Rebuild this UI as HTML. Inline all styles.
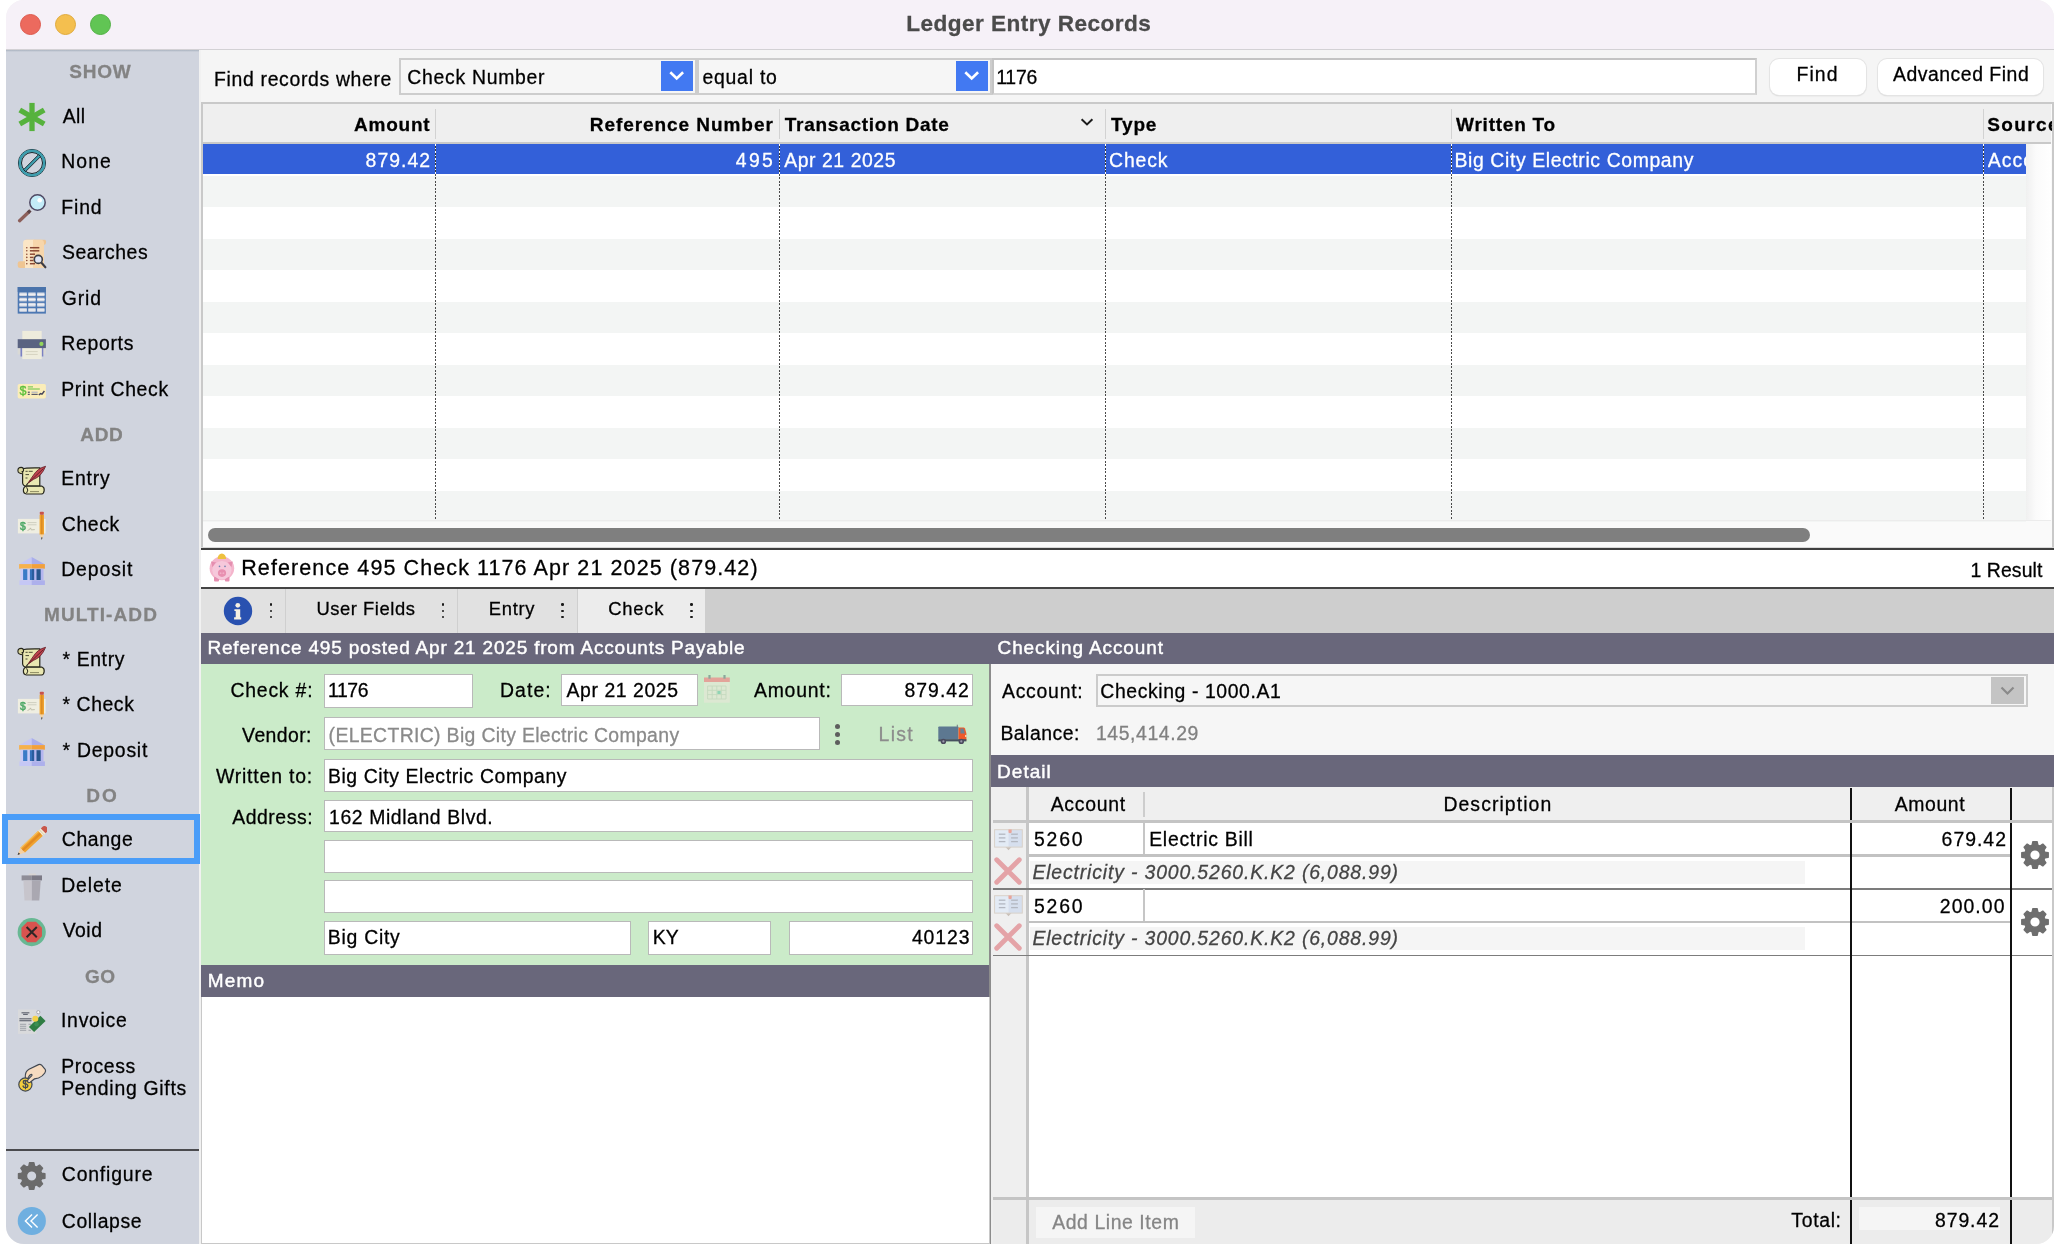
<!DOCTYPE html>
<html><head><meta charset="utf-8"><title>Ledger Entry Records</title>
<style>
*{box-sizing:border-box;margin:0;padding:0}
html,body{width:2054px;height:1244px;overflow:hidden;background:#fff}
body{font-family:"Liberation Sans",sans-serif;font-size:19.4px;color:#000;position:relative;line-height:24px;-webkit-text-stroke:.28px}
.a{position:absolute}
#win{position:absolute;left:6px;top:0;width:2048px;height:1244px;border-radius:18px;overflow:hidden;background:#f5f5f5}
#pg{position:absolute;left:-6px;top:0;width:2054px;height:1244px;will-change:transform}
.tl{position:absolute;top:14px;width:21px;height:21px;border-radius:50%}
.t{position:absolute;white-space:nowrap}
.f{position:absolute;background:#fff;border:1.5px solid #b9b9b9}
.dot{position:absolute;width:1.5px;background:repeating-linear-gradient(#4a4a4a 0 1.6px,transparent 1.6px 3.5px)}
.v3{position:absolute;width:2.5px}
.v3 i{display:block;width:2.5px;height:2.5px;background:#1a1a1a;margin-bottom:3.8px;border-radius:50%}
.d5{position:absolute;width:5px}
.d5 i{display:block;width:5px;height:5px;border-radius:50%;background:#5e5e5e;margin-bottom:3.2px}
</style></head><body>
<div id="win"><div id="pg">
<div class="a" style="left:0px;top:0px;width:2054px;height:49px;background:#f6f1f8;"></div>
<div class="a" style="left:0px;top:49px;width:2054px;height:1.5px;background:#d3d1d5;"></div>
<div class="tl" style="left:20px;background:#ec6a5e;border:1px solid #dd5a4e"></div><div class="tl" style="left:55px;background:#f4bf4f;border:1px solid #e0aa3c"></div><div class="tl" style="left:90px;background:#61c554;border:1px solid #52b145"></div>
<div class="t" style="left:906.29px;top:12.10px;letter-spacing:0.449px;font-size:22.6px;font-weight:bold;color:#4b4b4b;">Ledger Entry Records</div>
<div class="a" style="left:6px;top:50px;width:193px;height:1194px;background:#d0d4de;"></div>
<div class="a" style="left:6px;top:50px;width:193px;height:2px;background:linear-gradient(#aab3c0,#d0d4de);"></div>
<div class="t" style="left:69.15px;top:60.20px;letter-spacing:0.853px;font-size:19px;font-weight:bold;color:#838383;">SHOW</div>
<div class="t" style="left:80.33px;top:423.20px;letter-spacing:0.654px;font-size:19px;font-weight:bold;color:#838383;">ADD</div>
<div class="t" style="left:44.03px;top:603.40px;letter-spacing:1.092px;font-size:19px;font-weight:bold;color:#838383;">MULTI-ADD</div>
<div class="t" style="left:86.33px;top:784.30px;letter-spacing:1.869px;font-size:19px;font-weight:bold;color:#838383;">DO</div>
<div class="t" style="left:84.92px;top:964.70px;letter-spacing:0.520px;font-size:19px;font-weight:bold;color:#838383;">GO</div>
<svg class="a" style="left:17.3px;top:102.3px" width="30" height="30" viewBox="0 0 30 30"><g stroke="#56b23d" stroke-width="5.3"><line x1="15.00" y1="0.90" x2="15.00" y2="29.10"/><line x1="2.79" y1="7.95" x2="27.21" y2="22.05"/><line x1="27.21" y1="7.95" x2="2.79" y2="22.05"/></g></svg>
<div class="t" style="left:62.76px;top:103.70px;letter-spacing:0.438px;">All</div>
<svg class="a" style="left:17.3px;top:147.8px" width="30" height="30" viewBox="0 0 30 30"><circle cx="15" cy="15" r="13.6" fill="none" stroke="#16252b" stroke-width="1"/><circle cx="15" cy="15" r="12.1" fill="none" stroke="#3f9eae" stroke-width="2.6"/><circle cx="15" cy="15" r="10.5" fill="none" stroke="#16252b" stroke-width="1"/><path d="M6.6 21.6 L21.6 6.6 L23.6 8.6 L8.6 23.6Z" fill="#3f9eae" stroke="#16252b" stroke-width=".9"/><circle cx="15" cy="15" r="12.1" fill="none" stroke="#3f9eae" stroke-width="1.9"/></svg>
<div class="t" style="left:61.21px;top:149.20px;letter-spacing:1.092px;">None</div>
<svg class="a" style="left:17.3px;top:193.2px" width="30" height="30" viewBox="0 0 30 30"><line x1="2.6" y1="27.7" x2="11.5" y2="19.2" stroke="#8c5f5a" stroke-width="3.3" stroke-linecap="round"/><line x1="11" y1="19.7" x2="13.4" y2="17.4" stroke="#5c4346" stroke-width="3.3"/><circle cx="20.5" cy="9.5" r="7.7" fill="#c3ecf8" stroke="#4f4964" stroke-width="1.5"/><circle cx="22.7" cy="7.3" r="2.3" fill="#fff"/></svg>
<div class="t" style="left:61.21px;top:194.60px;letter-spacing:0.901px;">Find</div>
<svg class="a" style="left:17.3px;top:239.0px" width="30" height="30" viewBox="0 0 30 30"><path d="M8.5 0.8 H27.5 Q29.5 1 29 4 Q28.5 6 26.5 6 H15 Z" fill="#efc592"/><path d="M6.1 4 Q6.1 0.8 9.5 0.8 H17 V29.1 H6.1Z" fill="#fbe6c6"/><path d="M16 0.8 H24 Q27 1 27 4.5 V29.1 H16Z" fill="#f7d6ab"/><path d="M0.7 24.5 Q0.7 22.3 3 22.3 H8 V29.1 H3.2 Q0.7 29.1 0.7 26.8Z" fill="#efc592"/><g stroke="#8b4834" stroke-width="1.5"><line x1="12.9" y1="8.7" x2="22.3" y2="8.7"/><line x1="12.9" y1="11.8" x2="22.3" y2="11.8"/><line x1="12.9" y1="15.2" x2="18" y2="15.2"/><line x1="12.9" y1="18.4" x2="16.5" y2="18.4"/><line x1="12.9" y1="21.5" x2="16.5" y2="21.5"/><line x1="12.9" y1="24.7" x2="18" y2="24.7"/></g><g fill="#8b4834"><circle cx="9.8" cy="8.7" r=".8"/><circle cx="9.8" cy="11.8" r=".8"/><circle cx="9.8" cy="15.2" r=".8"/><circle cx="9.8" cy="18.4" r=".8"/><circle cx="9.8" cy="21.5" r=".8"/><circle cx="9.8" cy="24.7" r=".8"/></g><line x1="24.5" y1="23.8" x2="28.4" y2="28.3" stroke="#3c3c44" stroke-width="2.1" stroke-linecap="round"/><circle cx="21.3" cy="20.4" r="4" fill="#dfe4f4" stroke="#3c3c44" stroke-width="1.6"/></svg>
<div class="t" style="left:61.92px;top:240.40px;letter-spacing:0.546px;">Searches</div>
<svg class="a" style="left:17.3px;top:284.2px" width="30" height="30" viewBox="0 0 30 30"><rect x=".7" y="3" width="28.2" height="26.6" fill="#4c78b3"/><rect x=".7" y="3" width="28.2" height="4.9" fill="#4a73ab"/><rect x="2.4" y="8.5" width="7.4" height="3.6" fill="#d5d9e3"/><rect x="2.4" y="9.75" width="7.4" height="1.1" fill="#f1f2f5"/><rect x="2.4" y="13.7" width="7.4" height="3.7" fill="#d5d9e3"/><rect x="2.4" y="15.00" width="7.4" height="1.1" fill="#f1f2f5"/><rect x="2.4" y="18.9" width="7.4" height="3.7" fill="#d5d9e3"/><rect x="2.4" y="20.20" width="7.4" height="1.1" fill="#f1f2f5"/><rect x="2.4" y="24.2" width="7.4" height="3.6" fill="#d5d9e3"/><rect x="2.4" y="25.45" width="7.4" height="1.1" fill="#f1f2f5"/><rect x="11.3" y="8.5" width="7.3" height="3.6" fill="#d5d9e3"/><rect x="11.3" y="9.75" width="7.3" height="1.1" fill="#f1f2f5"/><rect x="11.3" y="13.7" width="7.3" height="3.7" fill="#d5d9e3"/><rect x="11.3" y="15.00" width="7.3" height="1.1" fill="#f1f2f5"/><rect x="11.3" y="18.9" width="7.3" height="3.7" fill="#d5d9e3"/><rect x="11.3" y="20.20" width="7.3" height="1.1" fill="#f1f2f5"/><rect x="11.3" y="24.2" width="7.3" height="3.6" fill="#d5d9e3"/><rect x="11.3" y="25.45" width="7.3" height="1.1" fill="#f1f2f5"/><rect x="20.2" y="8.5" width="7.3" height="3.6" fill="#d5d9e3"/><rect x="20.2" y="9.75" width="7.3" height="1.1" fill="#f1f2f5"/><rect x="20.2" y="13.7" width="7.3" height="3.7" fill="#d5d9e3"/><rect x="20.2" y="15.00" width="7.3" height="1.1" fill="#f1f2f5"/><rect x="20.2" y="18.9" width="7.3" height="3.7" fill="#d5d9e3"/><rect x="20.2" y="20.20" width="7.3" height="1.1" fill="#f1f2f5"/><rect x="20.2" y="24.2" width="7.3" height="3.6" fill="#d5d9e3"/><rect x="20.2" y="25.45" width="7.3" height="1.1" fill="#f1f2f5"/></svg>
<div class="t" style="left:61.82px;top:285.60px;letter-spacing:0.859px;">Grid</div>
<svg class="a" style="left:17.3px;top:330.0px" width="30" height="30" viewBox="0 0 30 30"><rect x="5.3" y=".9" width="19.4" height="9" fill="#eeecdc"/><rect x=".7" y="18" width="2.9" height="6.4" fill="#d9d9d5"/><rect x="26.1" y="18" width="2.8" height="6.4" fill="#d9d9d5"/><rect x="3.5" y="18" width="1.9" height="8.5" fill="#7b81c2"/><rect x="24.6" y="18" width="1.7" height="8.5" fill="#7b81c2"/><rect x="5.3" y="18" width="19.4" height="11.1" fill="#efeddd"/><rect x=".7" y="9.2" width="28.2" height="8.9" fill="#5a6381"/><circle cx="24.4" cy="13.9" r="2.1" fill="#93d65b"/><g stroke="#d5d3c0" stroke-width="1"><line x1="8.7" y1="21.6" x2="20.7" y2="21.6"/><line x1="8.7" y1="24.4" x2="20.7" y2="24.4"/></g></svg>
<div class="t" style="left:61.21px;top:331.40px;letter-spacing:0.711px;">Reports</div>
<svg class="a" style="left:17.3px;top:375.6px" width="30" height="30" viewBox="0 0 30 30"><rect x=".7" y="8" width="28.2" height="14.4" rx="1.6" fill="#fbedb8"/><text x="2.6" y="19.3" font-size="12.5" fill="#5cc03c" stroke="#5cc03c" stroke-width=".35" style="-webkit-text-stroke:0" font-family="Liberation Sans,sans-serif">$</text><g stroke="#67c447" stroke-width="1"><line x1="10.8" y1="10.9" x2="16" y2="10.9"/><line x1="10.8" y1="13" x2="22.8" y2="13"/></g><g fill="#5b5b6b"><rect x="10.8" y="15.6" width="2" height="1.3"/><rect x="10.8" y="17.8" width="2" height="1.2"/><rect x="14.5" y="17.8" width="6.2" height="1.2"/></g><rect x="14.5" y="15.6" width="6.2" height="1.3" fill="#b9b9c0"/><path d="M21.8 19 L23.5 17.6 L25 18.2 L27.4 15" stroke="#44445a" stroke-width="1.4" fill="none"/></svg>
<div class="t" style="left:61.21px;top:377.00px;letter-spacing:0.669px;">Print Check</div>
<svg class="a" style="left:17.3px;top:464.9px" width="30" height="30" viewBox="0 0 30 30"><path d="M5.6 4 Q8 2.6 22.8 2.9 V21.2 H9.8 Q6 21 5.6 18Z" fill="#e9e7b1" stroke="#26261c" stroke-width="1.2"/><path d="M5.8 8.7 Q0.9 8.7 0.9 5.4 Q0.9 2.4 4.2 2.4 Q6.6 2.4 6.6 5 Q6.6 6.8 4.6 6.6" fill="#d9d69b" stroke="#26261c" stroke-width="1.1"/><path d="M9.8 21.2 H25 Q27.4 22 27.2 25.2 Q27 28.6 24.5 29 H9.5 Q6.2 28.6 6.4 24.8 Q6.8 21.4 9.8 21.2Z" fill="#e9e7b1" stroke="#26261c" stroke-width="1.2"/><path d="M9.6 22.3 Q12 25 9.6 28" fill="none" stroke="#26261c" stroke-width="1"/><path d="M13 26.6 H22" stroke="#8d8b62" stroke-width="1"/><g stroke="#4a4a35" stroke-width="1" fill="none"><path d="M8.5 6.3 h2.2 m1 0 h4"/><path d="M8.5 9.6 h3.5"/><path d="M8.5 13 h2"/></g><path d="M28.6 1.3 Q20.5 3.2 16 10.8 L10.8 18.3 L16.4 14.4 Q24.5 11.5 28.6 1.3Z" fill="#c0444e" stroke="#5e1c25" stroke-width=".8"/><path d="M26.5 3.5 L11.6 17.6" stroke="#5e1c25" stroke-width=".9"/><path d="M10.8 18.3 L9.4 20.4" stroke="#26261c" stroke-width="1.1"/></svg>
<div class="t" style="left:61.21px;top:466.30px;letter-spacing:0.813px;">Entry</div>
<svg class="a" style="left:17.3px;top:510.9px" width="30" height="30" viewBox="0 0 30 30"><rect x=".9" y="7.9" width="27.7" height="14.5" fill="#efeee1"/><text x="3.1" y="18.6" font-size="10.3" fill="#4da867" stroke="#4da867" stroke-width=".5" style="-webkit-text-stroke:0" font-family="Liberation Sans,sans-serif">$</text><g stroke="#cfcfc0" stroke-width="1"><line x1="10.5" y1="11.6" x2="19.5" y2="11.6"/><line x1="10.5" y1="13.8" x2="19.5" y2="13.8"/></g><path d="M10.5 19.5 l2 -1 l1 -1.6 l.8 2 l3.5 -.3" stroke="#b9b9a6" stroke-width=".9" fill="none"/><rect x="22.6" y="3.7" width="4.4" height="20" fill="#f0a22f"/><rect x="24.1" y="3.7" width="1.4" height="20" fill="#d98a23"/><rect x="22.8" y=".8" width="4" height="3" rx=".8" fill="#c9534a"/><path d="M22.6 23.6 h4.4 l-2.2 4.2Z" fill="#f4d4a4"/><path d="M24.1 26.4 h1.4 l-.7 2.6Z" fill="#2b2b2b"/></svg>
<div class="t" style="left:61.81px;top:512.30px;letter-spacing:0.617px;">Check</div>
<svg class="a" style="left:17.3px;top:555.9px" width="30" height="30" viewBox="0 0 30 30"><path d="M14.7 1.1 L2.1 8.2 H14.7Z" fill="#c5c7f5"/><path d="M14.7 1.1 L27.9 8.2 H14.7Z" fill="#a9aeeb"/><rect x="2.1" y="8.1" width="12.6" height="4.6" fill="#f6b14e"/><rect x="14.7" y="8.1" width="13.2" height="4.6" fill="#f2a03b"/><rect x="3.5" y="12.6" width="11.2" height="11.9" fill="#cbcbf6"/><rect x="14.7" y="12.6" width="11.8" height="11.9" fill="#b4b6ef"/><rect x="6.1" y="13.2" width="4.2" height="10.8" fill="#3b7bc7"/><rect x="12.9" y="13.2" width="4.2" height="10.8" fill="#3571bb"/><rect x="15" y="13.2" width="2.1" height="10.8" fill="#2a5c9e"/><rect x="19.5" y="13.2" width="4.2" height="10.8" fill="#28568f"/><rect x="2.4" y="24.4" width="12.3" height="4.6" fill="#c5c7f5"/><rect x="14.7" y="24.4" width="13.2" height="4.6" fill="#adb0ec"/></svg>
<div class="t" style="left:61.21px;top:557.30px;letter-spacing:0.893px;">Deposit</div>
<svg class="a" style="left:17.3px;top:645.5px" width="30" height="30" viewBox="0 0 30 30"><path d="M5.6 4 Q8 2.6 22.8 2.9 V21.2 H9.8 Q6 21 5.6 18Z" fill="#e9e7b1" stroke="#26261c" stroke-width="1.2"/><path d="M5.8 8.7 Q0.9 8.7 0.9 5.4 Q0.9 2.4 4.2 2.4 Q6.6 2.4 6.6 5 Q6.6 6.8 4.6 6.6" fill="#d9d69b" stroke="#26261c" stroke-width="1.1"/><path d="M9.8 21.2 H25 Q27.4 22 27.2 25.2 Q27 28.6 24.5 29 H9.5 Q6.2 28.6 6.4 24.8 Q6.8 21.4 9.8 21.2Z" fill="#e9e7b1" stroke="#26261c" stroke-width="1.2"/><path d="M9.6 22.3 Q12 25 9.6 28" fill="none" stroke="#26261c" stroke-width="1"/><path d="M13 26.6 H22" stroke="#8d8b62" stroke-width="1"/><g stroke="#4a4a35" stroke-width="1" fill="none"><path d="M8.5 6.3 h2.2 m1 0 h4"/><path d="M8.5 9.6 h3.5"/><path d="M8.5 13 h2"/></g><path d="M28.6 1.3 Q20.5 3.2 16 10.8 L10.8 18.3 L16.4 14.4 Q24.5 11.5 28.6 1.3Z" fill="#c0444e" stroke="#5e1c25" stroke-width=".8"/><path d="M26.5 3.5 L11.6 17.6" stroke="#5e1c25" stroke-width=".9"/><path d="M10.8 18.3 L9.4 20.4" stroke="#26261c" stroke-width="1.1"/></svg>
<div class="t" style="left:62.49px;top:646.90px;letter-spacing:0.622px;">* Entry</div>
<svg class="a" style="left:17.3px;top:690.9px" width="30" height="30" viewBox="0 0 30 30"><rect x=".9" y="7.9" width="27.7" height="14.5" fill="#efeee1"/><text x="3.1" y="18.6" font-size="10.3" fill="#4da867" stroke="#4da867" stroke-width=".5" style="-webkit-text-stroke:0" font-family="Liberation Sans,sans-serif">$</text><g stroke="#cfcfc0" stroke-width="1"><line x1="10.5" y1="11.6" x2="19.5" y2="11.6"/><line x1="10.5" y1="13.8" x2="19.5" y2="13.8"/></g><path d="M10.5 19.5 l2 -1 l1 -1.6 l.8 2 l3.5 -.3" stroke="#b9b9a6" stroke-width=".9" fill="none"/><rect x="22.6" y="3.7" width="4.4" height="20" fill="#f0a22f"/><rect x="24.1" y="3.7" width="1.4" height="20" fill="#d98a23"/><rect x="22.8" y=".8" width="4" height="3" rx=".8" fill="#c9534a"/><path d="M22.6 23.6 h4.4 l-2.2 4.2Z" fill="#f4d4a4"/><path d="M24.1 26.4 h1.4 l-.7 2.6Z" fill="#2b2b2b"/></svg>
<div class="t" style="left:62.49px;top:692.30px;letter-spacing:0.576px;">* Check</div>
<svg class="a" style="left:17.3px;top:736.5px" width="30" height="30" viewBox="0 0 30 30"><path d="M14.7 1.1 L2.1 8.2 H14.7Z" fill="#c5c7f5"/><path d="M14.7 1.1 L27.9 8.2 H14.7Z" fill="#a9aeeb"/><rect x="2.1" y="8.1" width="12.6" height="4.6" fill="#f6b14e"/><rect x="14.7" y="8.1" width="13.2" height="4.6" fill="#f2a03b"/><rect x="3.5" y="12.6" width="11.2" height="11.9" fill="#cbcbf6"/><rect x="14.7" y="12.6" width="11.8" height="11.9" fill="#b4b6ef"/><rect x="6.1" y="13.2" width="4.2" height="10.8" fill="#3b7bc7"/><rect x="12.9" y="13.2" width="4.2" height="10.8" fill="#3571bb"/><rect x="15" y="13.2" width="2.1" height="10.8" fill="#2a5c9e"/><rect x="19.5" y="13.2" width="4.2" height="10.8" fill="#28568f"/><rect x="2.4" y="24.4" width="12.3" height="4.6" fill="#c5c7f5"/><rect x="14.7" y="24.4" width="13.2" height="4.6" fill="#adb0ec"/></svg>
<div class="t" style="left:62.49px;top:737.90px;letter-spacing:0.767px;">* Deposit</div>
<svg class="a" style="left:17.3px;top:825.7px" width="30" height="30" viewBox="0 0 30 30"><g transform="translate(.6 28.9) rotate(-43.2)"><path d="M0 0 L7 -3.4 V3.4Z" fill="#f5d0a2"/><path d="M0 0 L2.4 -1.15 V1.15Z" fill="#2b2b2b"/><rect x="7" y="-3.4" width="24.5" height="6.8" fill="#f0a22f"/><rect x="7" y="-1.1" width="24.5" height="2.2" fill="#e28a22"/><rect x="7" y="-3.4" width="24.5" height="1" fill="#f6c56a"/><rect x="31.5" y="-3.4" width="3.6" height="6.8" fill="#f3ecd6"/><rect x="32.6" y="-3.4" width=".9" height="6.8" fill="#d9cfae"/><path d="M35.1 -3.4 H37 A3.4 3.4 0 0 1 37 3.4 H35.1Z" fill="#c9574a"/></g></svg>
<div class="t" style="left:61.81px;top:827.10px;letter-spacing:0.598px;">Change</div>
<svg class="a" style="left:17.3px;top:871.5px" width="30" height="30" viewBox="0 0 30 30"><rect x="11.5" y="1.5" width="7.6" height="2.2" rx="1" fill="#d8d4d2"/><rect x="4.6" y="3.4" width="10.2" height="5" fill="#8f8d97"/><rect x="14.8" y="3.4" width="10.2" height="5" fill="#7c7a86"/><path d="M6.4 8.4 H14.8 V28.6 H7.5Z" fill="#c7c5cc"/><path d="M14.8 8.4 H23.7 L22.3 28.6 H14.8Z" fill="#aaa8b1"/></svg>
<div class="t" style="left:61.21px;top:872.90px;letter-spacing:0.895px;">Delete</div>
<svg class="a" style="left:17.3px;top:916.8px" width="30" height="30" viewBox="0 0 30 30"><circle cx="14.7" cy="15.1" r="14.1" fill="#68b893"/><polygon points="24.96,19.35 18.95,25.36 10.45,25.36 4.44,19.35 4.44,10.85 10.45,4.84 18.95,4.84 24.96,10.85" fill="#d9534f"/><path d="M9.6 10 L19.8 20.2 M19.8 10 L9.6 20.2" stroke="#2e2626" stroke-width="2"/></svg>
<div class="t" style="left:62.71px;top:918.20px;letter-spacing:0.502px;">Void</div>
<svg class="a" style="left:17.3px;top:1006.8px" width="30" height="30" viewBox="0 0 30 30"><rect x=".9" y="2.4" width="18.5" height="24.5" fill="#d9dadc"/><g stroke="#666a75" stroke-width="1.2"><line x1="4.5" y1="5.8" x2="12.4" y2="5.8"/><line x1="6.1" y1="7.4" x2="10.8" y2="7.4"/><line x1="2.4" y1="11.8" x2="14.5" y2="11.8"/><line x1="2.4" y1="13.7" x2="14.5" y2="13.7"/></g><g stroke="#a3a6ad" stroke-width="1.1"><line x1="3" y1="17.3" x2="9.2" y2="17.3"/><line x1="3" y1="19.3" x2="9.2" y2="19.3"/><line x1="3" y1="21.3" x2="9.2" y2="21.3"/><line x1="3" y1="23.3" x2="9.2" y2="23.3"/><line x1="11.5" y1="17.3" x2="14" y2="17.3"/><line x1="11.5" y1="23.3" x2="14" y2="23.3"/></g><polygon points="11.9,19.9 23.4,8.7 28.6,14.1 17.1,25.1" fill="#2f7d43"/><circle cx="19.6" cy="17.2" r="2.2" fill="#3c8f52"/><circle cx="18.3" cy="11.8" r="3" fill="#f3d047"/><circle cx="21.3" cy="5.2" r="1.6" fill="#fff" stroke="#9a9a9a" stroke-width=".8"/></svg>
<div class="t" style="left:61.01px;top:1008.20px;letter-spacing:0.731px;">Invoice</div>
<svg class="a" style="left:17.3px;top:1160.7px" width="30" height="30" viewBox="0 0 30 30"><path d="M24.49 12.13 L27.92 12.80 L27.92 17.20 L24.49 17.87 L23.65 19.89 L25.60 22.79 L22.49 25.90 L19.59 23.95 L17.57 24.79 L16.90 28.22 L12.50 28.22 L11.83 24.79 L9.81 23.95 L6.91 25.90 L3.80 22.79 L5.75 19.89 L4.91 17.87 L1.48 17.20 L1.48 12.80 L4.91 12.13 L5.75 10.11 L3.80 7.21 L6.91 4.10 L9.81 6.05 L11.83 5.21 L12.50 1.78 L16.90 1.78 L17.57 5.21 L19.59 6.05 L22.49 4.10 L25.60 7.21 L23.65 10.11Z M9.50 15.00 a5.2 5.2 0 1 0 10.4 0 a5.2 5.2 0 1 0 -10.4 0Z" fill="#6b6b6b" fill-rule="evenodd" stroke="#6b6b6b" stroke-width="1.4" stroke-linejoin="round"/><circle cx="14.7" cy="15" r="9.899999999999999" fill="none" stroke="#6b6b6b" stroke-width="1"/></svg>
<div class="t" style="left:61.81px;top:1162.10px;letter-spacing:0.829px;">Configure</div>
<svg class="a" style="left:17.3px;top:1205.8999999999999px" width="30" height="30" viewBox="0 0 30 30"><circle cx="14.8" cy="15" r="14.1" fill="#6fafe0"/><path d="M15 8.6 L8.4 15 L15 21.4 M20.6 8.6 L14 15 L20.6 21.4" stroke="#fff" stroke-width="1.4" fill="none"/></svg>
<div class="t" style="left:61.81px;top:1209.20px;letter-spacing:0.609px;">Collapse</div>
<svg class="a" style="left:17.3px;top:1062.5px" width="30" height="30" viewBox="0 0 30 30"><circle cx="8.4" cy="21.5" r="6.6" fill="#f2cd3d" stroke="#414852" stroke-width="1.2"/><text x="5.5" y="25.4" font-size="10.5" fill="#414852" stroke="#414852" stroke-width=".5" style="-webkit-text-stroke:0" font-family="Liberation Sans,sans-serif">$</text><path d="M8.3 14.2 Q8 8.5 12 6.3 L21.5 1.6 Q23.3 .8 24.6 2.2 L28.2 6.3 Q29.2 8 27.8 10 Q25.5 13.5 21.5 15 L17.6 15.8 L13.2 19.3 Q11.4 20.3 10.6 18.6 Q10.2 17.4 11.4 16.2 L14.8 12.6 Q15.4 11.4 14.2 11.3 Q12.6 11.6 11.4 14.2 Q10 16.6 8.3 14.2Z" fill="#f6dbc0" stroke="#414852" stroke-width="1.2" stroke-linejoin="round"/></svg>
<div class="t" style="left:61.21px;top:1053.90px;letter-spacing:0.669px;">Process</div>
<div class="t" style="left:61.21px;top:1076.40px;letter-spacing:0.719px;">Pending Gifts</div>
<div class="a" style="left:6px;top:1149px;width:193px;height:2px;background:#4a4a4e;"></div>
<div class="a" style="left:199px;top:50px;width:1855px;height:1194px;background:#f5f5f5;"></div>
<div class="t" style="left:214.11px;top:66.85px;letter-spacing:0.665px;">Find records where</div>
<div class="a" style="left:399px;top:58px;width:297.5px;height:36.5px;background:#f6f6f6;border:2px solid #cdcdcd"></div>
<div class="t" style="left:407.31px;top:65.30px;letter-spacing:0.721px;">Check Number</div>
<div class="a" style="left:661.3px;top:61.2px;width:31.8px;height:30.0px;background:#4279f2;"></div>
<svg class="a" style="left:661.3px;top:61.2px" width="32" height="30" viewBox="0 0 32 30"><path d="M9.3 11.2 L15.7 17.4 L22.1 11.2" stroke="#fff" stroke-width="2.6" fill="none"/></svg>
<div class="a" style="left:697px;top:58px;width:294.5px;height:36.5px;background:#f6f6f6;border:2px solid #cdcdcd"></div>
<div class="t" style="left:702.38px;top:65.30px;letter-spacing:0.786px;">equal to</div>
<div class="a" style="left:956.3px;top:61.2px;width:31.8px;height:30.0px;background:#4279f2;"></div>
<svg class="a" style="left:956.3px;top:61.2px" width="32" height="30" viewBox="0 0 32 30"><path d="M9.3 11.2 L15.7 17.4 L22.1 11.2" stroke="#fff" stroke-width="2.6" fill="none"/></svg>
<div class="a" style="left:992px;top:58px;width:765px;height:36.5px;background:#fff;border:2px solid #c4c4c4;border-bottom-color:#d8d8d8;border-right-color:#d0d0d0"></div>
<div class="t" style="left:996.22px;top:65.40px;letter-spacing:-0.209px;">1176</div>
<div class="a" style="left:1770px;top:58.5px;width:96px;height:36px;background:#fff;border-radius:9px;box-shadow:0 0 0 1px #e4e4e4,0 1px 1.5px rgba(0,0,0,.18)"></div>
<div class="t" style="left:1796.61px;top:61.80px;letter-spacing:1.034px;">Find</div>
<div class="a" style="left:1878px;top:58.5px;width:165px;height:36px;background:#fff;border-radius:9px;box-shadow:0 0 0 1px #e4e4e4,0 1px 1.5px rgba(0,0,0,.18)"></div>
<div class="t" style="left:1892.96px;top:61.80px;letter-spacing:0.531px;">Advanced Find</div>
<div class="a" style="left:201px;top:102px;width:1853px;height:446px;background:#fafafa;border:2px solid #c9c9c9;border-bottom:0"></div>
<div class="a" style="left:203px;top:104px;width:1848px;height:38.5px;background:#efefef;"></div>
<div class="a" style="left:203px;top:142px;width:1848px;height:2px;background:#c9c9c9;"></div>
<div class="a" style="left:203px;top:144.0px;width:1823px;height:31.5px;background:#fff;"></div>
<div class="a" style="left:203px;top:175.5px;width:1823px;height:31.5px;background:#f3f5f4;"></div>
<div class="a" style="left:203px;top:207.0px;width:1823px;height:31.5px;background:#fff;"></div>
<div class="a" style="left:203px;top:238.5px;width:1823px;height:31.5px;background:#f3f5f4;"></div>
<div class="a" style="left:203px;top:270.0px;width:1823px;height:31.5px;background:#fff;"></div>
<div class="a" style="left:203px;top:301.5px;width:1823px;height:31.5px;background:#f3f5f4;"></div>
<div class="a" style="left:203px;top:333.0px;width:1823px;height:31.5px;background:#fff;"></div>
<div class="a" style="left:203px;top:364.5px;width:1823px;height:31.5px;background:#f3f5f4;"></div>
<div class="a" style="left:203px;top:396.0px;width:1823px;height:31.5px;background:#fff;"></div>
<div class="a" style="left:203px;top:427.5px;width:1823px;height:31.5px;background:#f3f5f4;"></div>
<div class="a" style="left:203px;top:459.0px;width:1823px;height:31.5px;background:#fff;"></div>
<div class="a" style="left:203px;top:490.5px;width:1823px;height:31.5px;background:#f3f5f4;"></div>
<div class="a" style="left:2026px;top:144px;width:25px;height:376px;background:linear-gradient(90deg,#f0f0f0,#fbfbfb 40%,#fff);"></div>
<div class="a" style="left:203px;top:144px;width:1823px;height:29.7px;background:#3360d9;"></div>
<div class="a" style="left:434.5px;top:109px;width:1.5px;height:30px;background:#d2d2d2;"></div>
<div class="dot" style="left:434.5px;top:174px;height:345px"></div>
<div class="dot" style="left:434.5px;top:144px;height:30px;background:repeating-linear-gradient(#fff 0 1.75px,#3a3a3a 1.75px 3.5px);width:1.7px"></div>
<div class="a" style="left:778.5px;top:109px;width:1.5px;height:30px;background:#d2d2d2;"></div>
<div class="dot" style="left:778.5px;top:174px;height:345px"></div>
<div class="dot" style="left:778.5px;top:144px;height:30px;background:repeating-linear-gradient(#fff 0 1.75px,#3a3a3a 1.75px 3.5px);width:1.7px"></div>
<div class="a" style="left:1104.5px;top:109px;width:1.5px;height:30px;background:#d2d2d2;"></div>
<div class="dot" style="left:1104.5px;top:174px;height:345px"></div>
<div class="dot" style="left:1104.5px;top:144px;height:30px;background:repeating-linear-gradient(#fff 0 1.75px,#3a3a3a 1.75px 3.5px);width:1.7px"></div>
<div class="a" style="left:1450.5px;top:109px;width:1.5px;height:30px;background:#d2d2d2;"></div>
<div class="dot" style="left:1450.5px;top:174px;height:345px"></div>
<div class="dot" style="left:1450.5px;top:144px;height:30px;background:repeating-linear-gradient(#fff 0 1.75px,#3a3a3a 1.75px 3.5px);width:1.7px"></div>
<div class="a" style="left:1982.5px;top:109px;width:1.5px;height:30px;background:#d2d2d2;"></div>
<div class="dot" style="left:1982.5px;top:174px;height:345px"></div>
<div class="dot" style="left:1982.5px;top:144px;height:30px;background:repeating-linear-gradient(#fff 0 1.75px,#3a3a3a 1.75px 3.5px);width:1.7px"></div>
<div class="t" style="left:354.03px;top:112.75px;letter-spacing:0.769px;font-size:19px;font-weight:bold;">Amount</div>
<div class="t" style="left:589.73px;top:112.75px;letter-spacing:0.941px;font-size:19px;font-weight:bold;">Reference Number</div>
<div class="t" style="left:784.79px;top:112.75px;letter-spacing:0.734px;font-size:19px;font-weight:bold;">Transaction Date</div>
<div class="t" style="left:1110.89px;top:112.75px;letter-spacing:0.872px;font-size:19px;font-weight:bold;">Type</div>
<div class="t" style="left:1456.08px;top:112.75px;letter-spacing:0.771px;font-size:19px;font-weight:bold;">Written To</div>
<div class="t" style="left:1987.25px;top:112.75px;letter-spacing:1.397px;font-size:19px;font-weight:bold;width:64.75px;overflow:hidden;">Source</div>
<svg class="a" style="left:1080px;top:117px" width="14" height="10" viewBox="0 0 14 10"><path d="M1.6 2.2 L7 7.4 L12.4 2.2" stroke="#1c1c1c" stroke-width="2" fill="none"/></svg>
<div class="t" style="left:365.56px;top:147.50px;letter-spacing:1.056px;color:#fff;">879.42</div>
<div class="t" style="left:735.75px;top:147.50px;letter-spacing:2.346px;color:#fff;">495</div>
<div class="t" style="left:784.26px;top:147.50px;letter-spacing:0.555px;color:#fff;">Apr 21 2025</div>
<div class="t" style="left:1109.11px;top:147.50px;letter-spacing:0.817px;color:#fff;">Check</div>
<div class="t" style="left:1454.51px;top:147.50px;letter-spacing:0.612px;color:#fff;">Big City Electric Company</div>
<div class="t" style="left:1987.76px;top:147.50px;letter-spacing:1.020px;color:#fff;width:38.24px;overflow:hidden;">Accounts</div>
<div class="a" style="left:203px;top:520px;width:1848px;height:1px;background:#ececec;"></div>
<div class="a" style="left:208px;top:527.5px;width:1602px;height:14px;background:#7f7f7f;border-radius:7px"></div>
<div class="a" style="left:201px;top:546.5px;width:1853px;height:1.5px;background:#d9d9d9;"></div>
<div class="a" style="left:201px;top:548px;width:1853px;height:2.2px;background:#3f3f3f;"></div>
<div class="a" style="left:201px;top:550px;width:1853px;height:37px;background:#fff;"></div>
<svg class="a" style="left:209px;top:553px" width="26" height="30" viewBox="0 0 26 30"><ellipse cx="12.9" cy="15.3" rx="12.3" ry="11.9" fill="#f4b5cc"/><path d="M8.6 6 A4.25 5.5 0 0 1 17.1 6Z" fill="#eec13f"/><path d="M2 8.5 L7.2 9.6 L3.4 14.2Z" fill="#e58fb0"/><path d="M23.8 8.5 L18.6 9.6 L22.4 14.2Z" fill="#e58fb0"/><rect x="5" y="23.8" width="5" height="4.8" rx="1" fill="#e58fb0"/><rect x="15.9" y="23.8" width="4.6" height="4.8" rx="1" fill="#e58fb0"/><ellipse cx="12.9" cy="17.2" rx="9.6" ry="9.2" fill="#f6c8db"/><ellipse cx="13" cy="20.1" rx="4.1" ry="3.8" fill="#e88fb0"/><circle cx="11.6" cy="20.2" r=".9" fill="#f2aec8"/><circle cx="14.4" cy="20.2" r=".9" fill="#f2aec8"/><circle cx="10.5" cy="13.4" r=".8" fill="#6d7fae"/><circle cx="16" cy="13.4" r=".8" fill="#6d7fae"/></svg>
<div class="t" style="left:241.24px;top:555.60px;letter-spacing:1.095px;font-size:21.5px;">Reference 495 Check 1176 Apr 21 2025 (879.42)</div>
<div class="t" style="left:1970.42px;top:557.60px;letter-spacing:0.122px;">1 Result</div>
<div class="a" style="left:201px;top:587px;width:1853px;height:2.2px;background:#444;"></div>
<div class="a" style="left:201px;top:589px;width:1853px;height:44px;background:#cecece;"></div>
<div class="a" style="left:201px;top:589px;width:376px;height:44px;background:#e1e1e1;"></div>
<div class="a" style="left:577px;top:589px;width:128px;height:44px;background:#ececec;"></div>
<div class="a" style="left:284.5px;top:589px;width:1.5px;height:44px;background:#cfcfcf;"></div>
<div class="a" style="left:456.5px;top:589px;width:1.5px;height:44px;background:#cfcfcf;"></div>
<div class="a" style="left:576.5px;top:589px;width:1.5px;height:44px;background:#cfcfcf;"></div>
<svg class="a" style="left:222.8px;top:596.1px" width="30" height="30" viewBox="0 0 30 30"><circle cx="15" cy="15" r="14.2" fill="#2951b0"/><circle cx="14.8" cy="9.3" r="2.4" fill="#f6f0e2"/><path d="M11.4 13.2 H17.2 V21.2 H18.2 V23.4 H11.1 V21.2 H12.7 V15 H11.4Z" fill="#f6f0e2"/></svg>
<div class="v3" style="left:269.8px;top:603.4px"><i></i><i></i><i></i></div>
<div class="v3" style="left:441.8px;top:603.4px"><i></i><i></i><i></i></div>
<div class="v3" style="left:561.3px;top:603.4px"><i></i><i></i><i></i></div>
<div class="v3" style="left:690.3px;top:603.4px"><i></i><i></i><i></i></div>
<div class="t" style="left:316.38px;top:596.50px;letter-spacing:0.554px;font-size:18.4px;">User Fields</div>
<div class="t" style="left:488.79px;top:596.50px;letter-spacing:0.700px;font-size:18.4px;">Entry</div>
<div class="t" style="left:608.27px;top:596.50px;letter-spacing:0.763px;font-size:18.4px;">Check</div>
<div class="a" style="left:201px;top:633px;width:1853px;height:30.7px;background:#69677b;"></div>
<div class="t" style="left:207.44px;top:636.20px;letter-spacing:0.809px;font-size:19px;color:#fff;-webkit-text-stroke:.45px #fff;">Reference 495 posted Apr 21 2025 from Accounts Payable</div>
<div class="t" style="left:997.54px;top:636.20px;letter-spacing:0.891px;font-size:19px;color:#fff;-webkit-text-stroke:.45px #fff;">Checking Account</div>
<div class="a" style="left:199px;top:50px;width:2px;height:1194px;background:#f1f1f1;"></div>
<div class="a" style="left:201px;top:664px;width:788px;height:301px;background:#cbebc9;"></div>
<div class="a" style="left:989px;top:664px;width:1.8px;height:580px;background:#8c8c8c;"></div>
<div class="t" style="left:230.41px;top:678.10px;letter-spacing:0.800px;">Check #:</div>
<div class="f" style="left:323.5px;top:673.5px;width:149.0px;height:34.0px"></div>
<div class="t" style="left:327.92px;top:678.10px;letter-spacing:-0.350px;">1176</div>
<div class="t" style="left:499.91px;top:678.10px;letter-spacing:1.124px;">Date:</div>
<div class="f" style="left:560.5px;top:673.5px;width:137.0px;height:32.0px"></div>
<div class="t" style="left:566.56px;top:678.20px;letter-spacing:0.575px;">Apr 21 2025</div>
<svg class="a" style="left:703.9px;top:674.5px" width="26" height="28" viewBox="0 0 26 28"><rect x="0" y="6.9" width="25.8" height="20.8" fill="#dce8d2"/><rect x="0" y="2.5" width="25.8" height="4.5" fill="#e3a39a"/><rect x="4.4" y="0" width="2.2" height="3.7" fill="#8aa79a"/><rect x="19.4" y="0" width="2.2" height="3.7" fill="#8aa79a"/><g stroke="#c4d9be" stroke-width=".9" fill="none"><path d="M3.6 11 H22 V24 H3.6Z M3.6 15.3 H22 M3.6 19.6 H22 M8.2 11 V24 M12.8 11 V24 M17.4 11 V24"/></g><rect x="13.4" y="16" width="3.2" height="3" fill="#8fd4b4"/></svg>
<div class="t" style="left:753.96px;top:678.10px;letter-spacing:0.777px;">Amount:</div>
<div class="f" style="left:841px;top:673.5px;width:132px;height:32.0px"></div>
<div class="t" style="left:904.56px;top:678.20px;letter-spacing:0.996px;">879.42</div>
<div class="t" style="left:242.11px;top:722.60px;letter-spacing:0.418px;">Vendor:</div>
<div class="f" style="left:323.5px;top:717px;width:496.5px;height:32.5px"></div>
<div class="t" style="left:328.60px;top:722.60px;letter-spacing:0.347px;color:#8a8a8a;">(ELECTRIC) Big City Electric Company</div>
<div class="d5" style="left:835px;top:723.5px"><i></i><i></i><i></i></div>
<div class="t" style="left:878.61px;top:722.40px;letter-spacing:1.248px;color:#8c8c8c;">List</div>
<svg class="a" style="left:937.5px;top:723.5px" width="30" height="22" viewBox="0 0 30 22"><rect x="18.8" y=".7" width=".9" height="3" fill="#6a6a7a"/><rect x=".3" y="2.5" width="20.2" height="12.9" rx=".8" fill="#5d7891"/><path d="M20.5 3.6 H25.6 Q26.6 3.6 27 4.6 L28.4 9.5 V16.5 H20.5Z" fill="#f05a28"/><path d="M22.4 4.6 H25.5 L26.9 9.4 H22.4Z" fill="#6b8092"/><rect x=".3" y="15.2" width="28.1" height="2.2" fill="#46505f"/><rect x="27.2" y="11" width="1.2" height="2" fill="#fbe9c8"/><circle cx="5.4" cy="17.4" r="2.7" fill="#4b4a5e"/><circle cx="23.3" cy="17.4" r="2.7" fill="#4b4a5e"/><circle cx="5.4" cy="17.4" r="1.1" fill="#9a9aad"/><circle cx="23.3" cy="17.4" r="1.1" fill="#9a9aad"/></svg>
<div class="t" style="left:215.91px;top:764.20px;letter-spacing:0.826px;">Written to:</div>
<div class="f" style="left:323.5px;top:759px;width:649.5px;height:32.5px"></div>
<div class="t" style="left:327.91px;top:764.20px;letter-spacing:0.603px;">Big City Electric Company</div>
<div class="t" style="left:232.16px;top:804.50px;letter-spacing:0.550px;">Address:</div>
<div class="f" style="left:323.5px;top:799.5px;width:649.5px;height:32.5px"></div>
<div class="t" style="left:329.02px;top:804.50px;letter-spacing:0.596px;">162 Midland Blvd.</div>
<div class="f" style="left:323.5px;top:839.5px;width:649.5px;height:33.0px"></div>
<div class="f" style="left:323.5px;top:880px;width:649.5px;height:32.5px"></div>
<div class="f" style="left:323.5px;top:920.5px;width:307.5px;height:34.5px"></div>
<div class="t" style="left:327.81px;top:925.30px;letter-spacing:0.741px;">Big City</div>
<div class="f" style="left:648px;top:920.5px;width:123px;height:34.5px"></div>
<div class="t" style="left:652.71px;top:925.30px;letter-spacing:0.238px;">KY</div>
<div class="f" style="left:789px;top:920.5px;width:184px;height:34.5px"></div>
<div class="t" style="left:911.95px;top:925.30px;letter-spacing:0.888px;">40123</div>
<div class="a" style="left:201px;top:965px;width:788px;height:32px;background:#69677b;"></div>
<div class="t" style="left:207.74px;top:969.20px;letter-spacing:1.223px;font-size:19px;color:#fff;-webkit-text-stroke:.45px #fff;">Memo</div>
<div class="a" style="left:201px;top:997px;width:789px;height:247px;background:#fff;border:1.5px solid #c8c8c8;border-top:0"></div>
<div class="a" style="left:991px;top:664px;width:1063px;height:91px;background:#f6f6f6;"></div>
<div class="t" style="left:1001.96px;top:678.50px;letter-spacing:0.760px;">Account:</div>
<div class="a" style="left:1096px;top:673.5px;width:931.5px;height:33.5px;background:#f6f6f6;border:2px solid #cbcbcb"></div>
<div class="t" style="left:1100.31px;top:678.50px;letter-spacing:0.596px;">Checking - 1000.A1</div>
<div class="a" style="left:1991px;top:677px;width:33px;height:27px;background:#c4c4c4;"></div>
<svg class="a" style="left:1991px;top:677px" width="33" height="27" viewBox="0 0 33 27"><path d="M10.5 10.5 L16.5 16.5 L22.5 10.5" stroke="#8a8a8a" stroke-width="2.2" fill="none"/></svg>
<div class="t" style="left:1000.41px;top:720.60px;letter-spacing:0.495px;">Balance:</div>
<div class="t" style="left:1095.92px;top:720.60px;letter-spacing:0.600px;color:#808080;">145,414.29</div>
<div class="a" style="left:991px;top:755px;width:1063px;height:31.5px;background:#69677b;"></div>
<div class="t" style="left:997.04px;top:759.50px;letter-spacing:1.031px;font-size:19px;color:#fff;-webkit-text-stroke:.45px #fff;">Detail</div>
<div class="a" style="left:991px;top:786.5px;width:1063px;height:457.5px;background:#fff;"></div>
<div class="a" style="left:991px;top:786.5px;width:1063px;height:34px;background:#efefef;"></div>
<div class="a" style="left:991px;top:786.5px;width:36px;height:457.5px;background:#efefef;"></div>
<div class="a" style="left:1026px;top:786.5px;width:3px;height:457.5px;background:#c6c6c6;"></div>
<div class="a" style="left:1029px;top:820px;width:1025px;height:2.5px;background:#c6c6c6;"></div>
<div class="a" style="left:993px;top:820px;width:33px;height:2.5px;background:#c6c6c6;"></div>
<div class="a" style="left:1143px;top:791.5px;width:1.5px;height:25px;background:#cdcdcd;"></div>
<div class="t" style="left:1050.66px;top:792.40px;letter-spacing:0.730px;">Account</div>
<div class="t" style="left:1443.41px;top:792.40px;letter-spacing:1.081px;">Description</div>
<div class="t" style="left:1894.76px;top:792.40px;letter-spacing:0.604px;">Amount</div>
<svg class="a" style="left:993.6px;top:828.5px" width="29" height="22" viewBox="0 0 29 22"><path d="M11.5 18 H17.5 L14.5 21.2Z" fill="#c9c1b9"/><rect x=".6" y=".7" width="13.8" height="17.4" fill="#e3ebf5" /><rect x="14.4" y=".7" width="13.9" height="17.4" fill="#d6dfee"/><rect x=".6" y=".7" width="27.7" height="17.4" fill="none" stroke="#d9d1c8" stroke-width="1"/><path d="M14.5 .5 h3.2 v3 q-1.6 1.6 -3.2 0Z" fill="#e9a59a"/><g stroke="#b3b7c0" stroke-width="1.3"><line x1="4.8" y1="5.2" x2="11.4" y2="5.2"/><line x1="4.8" y1="8.9" x2="11.4" y2="8.9"/><line x1="4.8" y1="12.6" x2="11.4" y2="12.6"/><line x1="17.1" y1="5.2" x2="23.9" y2="5.2"/><line x1="17.1" y1="8.9" x2="23.9" y2="8.9"/><line x1="17.1" y1="12.6" x2="23.9" y2="12.6"/></g></svg>
<div class="t" style="left:1034.02px;top:827.40px;letter-spacing:1.792px;">5260</div>
<div class="a" style="left:1143px;top:822.5px;width:2px;height:32px;background:#c6c6c6;"></div>
<div class="t" style="left:1149.21px;top:827.40px;letter-spacing:0.736px;">Electric Bill</div>
<div class="t" style="left:1941.61px;top:827.40px;letter-spacing:1.005px;">679.42</div>
<div class="a" style="left:1029px;top:854.0px;width:982px;height:2.5px;background:#c2c2c2;"></div>
<svg class="a" style="left:994px;top:856.7px" width="28" height="28" viewBox="0 0 28 28"><path d="M2.7 2.7 L25.3 25.3 M25.3 2.7 L2.7 25.3" stroke="#e4a3a7" stroke-width="4.8" stroke-linecap="round"/></svg>
<div class="a" style="left:1029.5px;top:860.5px;width:775px;height:23px;background:#f5f5f5;"></div>
<div class="t" style="left:1032.40px;top:859.90px;letter-spacing:0.856px;font-style:italic;color:#444;">Electricity - 3000.5260.K.K2 (6,088.99)</div>
<div class="a" style="left:993px;top:888.0px;width:1061px;height:1.7px;background:#7c7c7c;"></div>
<svg class="a" style="left:2019.8px;top:840.0px" width="30" height="30" viewBox="0 0 30 30"><path d="M24.79 12.13 L28.22 12.80 L28.22 17.20 L24.79 17.87 L23.95 19.89 L25.90 22.79 L22.79 25.90 L19.89 23.95 L17.87 24.79 L17.20 28.22 L12.80 28.22 L12.13 24.79 L10.11 23.95 L7.21 25.90 L4.10 22.79 L6.05 19.89 L5.21 17.87 L1.78 17.20 L1.78 12.80 L5.21 12.13 L6.05 10.11 L4.10 7.21 L7.21 4.10 L10.11 6.05 L12.13 5.21 L12.80 1.78 L17.20 1.78 L17.87 5.21 L19.89 6.05 L22.79 4.10 L25.90 7.21 L23.95 10.11Z M9.70 15.00 a5.3 5.3 0 1 0 10.6 0 a5.3 5.3 0 1 0 -10.6 0Z" fill="#6e6e6e" fill-rule="evenodd" stroke="#6e6e6e" stroke-width="1.4" stroke-linejoin="round"/><circle cx="15" cy="15" r="9.899999999999999" fill="none" stroke="#6e6e6e" stroke-width="1"/></svg>
<svg class="a" style="left:993.6px;top:895px" width="29" height="22" viewBox="0 0 29 22"><path d="M11.5 18 H17.5 L14.5 21.2Z" fill="#c9c1b9"/><rect x=".6" y=".7" width="13.8" height="17.4" fill="#e3ebf5" /><rect x="14.4" y=".7" width="13.9" height="17.4" fill="#d6dfee"/><rect x=".6" y=".7" width="27.7" height="17.4" fill="none" stroke="#d9d1c8" stroke-width="1"/><path d="M14.5 .5 h3.2 v3 q-1.6 1.6 -3.2 0Z" fill="#e9a59a"/><g stroke="#b3b7c0" stroke-width="1.3"><line x1="4.8" y1="5.2" x2="11.4" y2="5.2"/><line x1="4.8" y1="8.9" x2="11.4" y2="8.9"/><line x1="4.8" y1="12.6" x2="11.4" y2="12.6"/><line x1="17.1" y1="5.2" x2="23.9" y2="5.2"/><line x1="17.1" y1="8.9" x2="23.9" y2="8.9"/><line x1="17.1" y1="12.6" x2="23.9" y2="12.6"/></g></svg>
<div class="t" style="left:1034.02px;top:893.90px;letter-spacing:1.792px;">5260</div>
<div class="a" style="left:1143px;top:889px;width:2px;height:32px;background:#c6c6c6;"></div>
<div class="t" style="left:1939.82px;top:893.90px;letter-spacing:1.059px;">200.00</div>
<div class="a" style="left:1029px;top:920.5px;width:982px;height:2.5px;background:#c2c2c2;"></div>
<svg class="a" style="left:994px;top:923.2px" width="28" height="28" viewBox="0 0 28 28"><path d="M2.7 2.7 L25.3 25.3 M25.3 2.7 L2.7 25.3" stroke="#e4a3a7" stroke-width="4.8" stroke-linecap="round"/></svg>
<div class="a" style="left:1029.5px;top:927px;width:775px;height:23px;background:#f5f5f5;"></div>
<div class="t" style="left:1032.40px;top:926.40px;letter-spacing:0.856px;font-style:italic;color:#444;">Electricity - 3000.5260.K.K2 (6,088.99)</div>
<div class="a" style="left:993px;top:954.5px;width:1061px;height:1.7px;background:#7c7c7c;"></div>
<svg class="a" style="left:2019.8px;top:906.5px" width="30" height="30" viewBox="0 0 30 30"><path d="M24.79 12.13 L28.22 12.80 L28.22 17.20 L24.79 17.87 L23.95 19.89 L25.90 22.79 L22.79 25.90 L19.89 23.95 L17.87 24.79 L17.20 28.22 L12.80 28.22 L12.13 24.79 L10.11 23.95 L7.21 25.90 L4.10 22.79 L6.05 19.89 L5.21 17.87 L1.78 17.20 L1.78 12.80 L5.21 12.13 L6.05 10.11 L4.10 7.21 L7.21 4.10 L10.11 6.05 L12.13 5.21 L12.80 1.78 L17.20 1.78 L17.87 5.21 L19.89 6.05 L22.79 4.10 L25.90 7.21 L23.95 10.11Z M9.70 15.00 a5.3 5.3 0 1 0 10.6 0 a5.3 5.3 0 1 0 -10.6 0Z" fill="#6e6e6e" fill-rule="evenodd" stroke="#6e6e6e" stroke-width="1.4" stroke-linejoin="round"/><circle cx="15" cy="15" r="9.899999999999999" fill="none" stroke="#6e6e6e" stroke-width="1"/></svg>
<div class="a" style="left:993px;top:1198px;width:1061px;height:46px;background:#ececec;"></div>
<div class="a" style="left:1026px;top:1195px;width:3px;height:49px;background:#c6c6c6;"></div>
<div class="a" style="left:1036px;top:1207px;width:158.5px;height:31px;background:#f5f5f5;"></div>
<div class="t" style="left:1052.16px;top:1210.30px;letter-spacing:0.584px;color:#858585;">Add Line Item</div>
<div class="t" style="left:1791.36px;top:1207.60px;letter-spacing:0.658px;">Total:</div>
<div class="a" style="left:1858.5px;top:1206.5px;width:141px;height:23px;background:#f5f5f5;"></div>
<div class="t" style="left:1934.96px;top:1207.60px;letter-spacing:0.936px;">879.42</div>
<div class="a" style="left:2052px;top:786.5px;width:2px;height:457.5px;background:#c9c9c9;"></div>
<div class="a" style="left:1850.3px;top:788px;width:1.8px;height:456px;background:#111;"></div>
<div class="a" style="left:2010.1px;top:788px;width:1.8px;height:456px;background:#111;"></div>
<div class="a" style="left:993px;top:1196.6px;width:1059px;height:3px;background:#c4c4c4;"></div>
<div class="a" style="left:1029px;top:820px;width:1023px;height:2.7px;background:#c4c4c4;"></div>
</div></div>
<div class="a" style="left:2px;top:814px;width:198px;height:50px;border:6px solid #4a9df8"></div>
</body></html>
